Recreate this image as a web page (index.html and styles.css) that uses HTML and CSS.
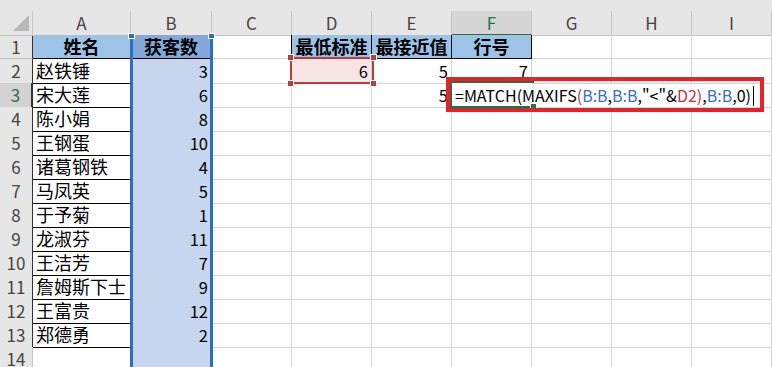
FILE: index.html
```html
<!DOCTYPE html>
<html lang="zh-CN">
<head>
    <meta charset="UTF-8">
    <meta name="viewport" content="width=device-width, initial-scale=1.0">
    <title>获客数</title>
    <link rel="stylesheet" href="styles.css">
</head>
<body>
    <div class="sheet">
        <div class="strip"></div>
        <div class="row heads">
            <div class="corner"><span class="tri"></span></div>
            <div class="tb">A</div>
            <div class="tb">B</div>
            <div>C</div>
            <div class="tb">D</div>
            <div class="tb">E</div>
            <div class="tb act-col">F</div>
            <div>G</div>
            <div>H</div>
            <div>I</div>
        </div>

        <div class="row">
            <div class="rh tl">1</div>
            <div class="hd">姓名</div>
            <div class="hd colb-hd">获客数</div>
            <div class="edge"></div>
            <div class="hd">最低标准</div>
            <div class="hd">最接近值</div>
            <div class="hd">行号</div>
            <div></div><div></div><div></div>
        </div>
        <div class="row">
            <div class="rh tl">2</div>
            <div class="name">赵铁锤</div>
            <div class="num colb">3</div>
            <div></div>
            <div class="num crit">6</div>
            <div class="num">5</div>
            <div class="num">7</div>
            <div></div><div></div><div></div>
        </div>
        <div class="row">
            <div class="rh tl act-row">3</div>
            <div class="name">宋大莲</div>
            <div class="num colb">6</div>
            <div></div>
            <div></div>
            <div class="num">5</div>
            <div class="editing">=MATCH(MAXIFS<span class="p">(</span><span class="ref">B:B</span>,<span class="ref">B:B</span>,"&lt;"&amp;<span class="ref2">D2</span><span class="p">)</span>,<span class="ref">B:B</span>,0)<span class="caret"></span></div>
            <div class="ov"></div><div class="ov"></div><div></div>
        </div>
        <div class="row">
            <div class="rh tl">4</div>
            <div class="name">陈小娟</div>
            <div class="num colb">8</div>
            <div></div><div></div><div></div><div></div><div></div><div></div><div></div>
        </div>
        <div class="row">
            <div class="rh tl">5</div>
            <div class="name">王钢蛋</div>
            <div class="num colb">10</div>
            <div></div><div></div><div></div><div></div><div></div><div></div><div></div>
        </div>
        <div class="row">
            <div class="rh tl">6</div>
            <div class="name">诸葛钢铁</div>
            <div class="num colb">4</div>
            <div></div><div></div><div></div><div></div><div></div><div></div><div></div>
        </div>
        <div class="row">
            <div class="rh tl">7</div>
            <div class="name">马凤英</div>
            <div class="num colb">5</div>
            <div></div><div></div><div></div><div></div><div></div><div></div><div></div>
        </div>
        <div class="row">
            <div class="rh tl">8</div>
            <div class="name">于予菊</div>
            <div class="num colb">1</div>
            <div></div><div></div><div></div><div></div><div></div><div></div><div></div>
        </div>
        <div class="row">
            <div class="rh tl">9</div>
            <div class="name">龙淑芬</div>
            <div class="num colb">11</div>
            <div></div><div></div><div></div><div></div><div></div><div></div><div></div>
        </div>
        <div class="row">
            <div class="rh tl">10</div>
            <div class="name">王洁芳</div>
            <div class="num colb">7</div>
            <div></div><div></div><div></div><div></div><div></div><div></div><div></div>
        </div>
        <div class="row">
            <div class="rh tl">11</div>
            <div class="name">詹姆斯下士</div>
            <div class="num colb">9</div>
            <div></div><div></div><div></div><div></div><div></div><div></div><div></div>
        </div>
        <div class="row">
            <div class="rh tl">12</div>
            <div class="name">王富贵</div>
            <div class="num colb">12</div>
            <div></div><div></div><div></div><div></div><div></div><div></div><div></div>
        </div>
        <div class="row">
            <div class="rh tl">13</div>
            <div class="name">郑德勇</div>
            <div class="num colb">2</div>
            <div></div><div></div><div></div><div></div><div></div><div></div><div></div>
        </div>
        <div class="row">
            <div class="rh">14</div>
            <div></div>
            <div class="colb plain"></div>
            <div></div><div></div><div></div><div></div><div></div><div></div><div></div>
        </div>

        <!-- selection frames drawn over the grid -->
        <div class="sel-col"><i class="hdl hl"></i><i class="hdl hr"></i></div>
        <div class="sel-crit"><i class="sq s1"></i><i class="sq s2"></i><i class="sq s3"></i><i class="sq s4"></i></div>
        <div class="sel-edit"><i class="fill"></i></div>
        <div class="mark"></div>
    </div>
</body>
</html>
```

FILE: styles.css
```css
body {
    margin: 0;
    background: #fff;
    overflow: hidden;
    font-family: "Noto Sans CJK SC", sans-serif;
}
.sheet {
    position: relative;
    width: 772px;
}
.strip {
    height: 11px;
    background: #e6e6e6;
}
.row {
    display: grid;
    grid-template-columns: 33px 98px 81px repeat(7, 80px);
    height: 24px;
}
.row > div {
    box-sizing: border-box;
    border-right: 1px solid #d4d4d4;
    border-bottom: 1px solid #d4d4d4;
    padding: 0 3px;
    font-size: 18px;
    line-height: 23px;
    white-space: nowrap;
    color: #000;
}

/* column letters */
.heads > div {
    background: #e6e6e6;
    border-color: #c4c4c4;
    text-align: center;
    color: #444;
    font-size: 17px;
}
.heads > .tb { border-bottom-color: #333; }
.heads > .act-col {
    background: #d6d6d6;
    color: #217346;
    border-bottom: 2px solid #217346;
}
.heads > .corner {
    position: relative;
    border-bottom-color: #c4c4c4;
}
.tri {
    position: absolute;
    right: 3px;
    bottom: 4px;
    border-left: 16px solid transparent;
    border-bottom: 16px solid #b8b8b8;
}

/* row numbers */
.row > .rh {
    background: #e6e6e6;
    border-color: #c4c4c4;
    text-align: center;
    color: #444;
    font-size: 17px;
    padding: 0;
}
.row > .rh.tl { border-right-color: #333; }
.row > .act-row {
    background: #d2d2d2;
    color: #217346;
    border-right: 2px solid #217346;
}

/* data table */
.row > .hd {
    background: #9dc3e6;
    font-weight: bold;
    text-align: center;
    border-right-color: #000;
    border-bottom-color: #000;
}
.row > .name {
    border-right-color: #000;
    border-bottom-color: #000;
}
.row > .edge { border-right-color: #000; }
.row > .num {
    text-align: right;
    font-size: 16.5px;
    padding-top: 1px;
}
.row > .colb {
    background: #c6d6ee;
    border-bottom-color: #000;
}
.row > .colb.plain { border-bottom-color: #d4d4d4; }
.row > .colb-hd { background: #82a9da; }
.row > .crit { background: #f7e5e6; }

/* formula being typed in F3 */
.row > .editing {
    position: relative;
    z-index: 2;
    overflow: visible;
    border-right: none;
    background: #fff;
    padding: 1px 0 0 3px;
    font-size: 16px;
}
.row > .ov { border-right: none; }
.ref { color: #3a6fd0; }
.ref2 { color: #c8323a; }
.p { color: #c8323a; }
.caret {
    display: inline-block;
    width: 1px;
    height: 20px;
    background: #000;
    vertical-align: -4px;
    margin-left: 2px;
}

/* selected column B */
.sel-col {
    position: absolute;
    left: 130px;
    top: 35px;
    width: 77px;
    height: 340px;
    border-left: 3px solid #2f6cc6;
    border-right: 3px solid #2f6cc6;
    z-index: 3;
}
.hdl {
    position: absolute;
    top: -2px;
    width: 5px;
    height: 4px;
    background: #2f6cc6;
    border: 1px solid #fff;
}
.hl { left: -5px; }
.hr { right: -5px; }

/* criteria cell D2 */
.sel-crit {
    position: absolute;
    left: 290px;
    top: 57px;
    width: 80px;
    height: 23px;
    border: 2px solid #c0393f;
    z-index: 3;
}
.sq {
    position: absolute;
    width: 5px;
    height: 5px;
    background: #c0393f;
    border: 1px solid #fff;
}
.s1 { left: -5px; top: -5px; }
.s2 { right: -5px; top: -5px; }
.s3 { left: -5px; bottom: -5px; }
.s4 { right: -5px; bottom: -5px; }

/* active cell F3 */
.sel-edit {
    position: absolute;
    left: 450px;
    top: 81px;
    width: 82px;
    height: 23px;
    border: 2px solid #217346;
    border-right: none;
    z-index: 3;
}
.fill {
    position: absolute;
    right: -3px;
    bottom: -4px;
    width: 5px;
    height: 5px;
    background: #217346;
    border: 1px solid #fff;
}

/* red note frame */
.mark {
    position: absolute;
    left: 446px;
    top: 77px;
    width: 310px;
    height: 27px;
    border: 4px solid #e8202a;
    z-index: 4;
}
```
